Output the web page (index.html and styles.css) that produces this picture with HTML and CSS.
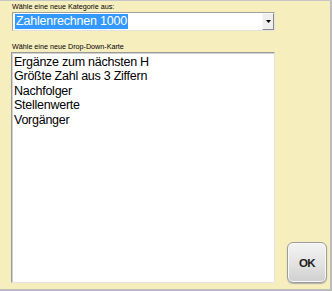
FILE: index.html
```html
<!DOCTYPE html>
<html lang="de">
<head>
  <meta charset="UTF-8" />
  <meta name="viewport" content="width=device-width, initial-scale=1.0" />
  <title>Kartenauswahl</title>
  <link rel="stylesheet" href="styles.css">
</head>
<body>
  <div class="panel">
    <div class="caption">Wähle eine neue Kategorie aus:</div>
    <div class="combo">
      <span class="combo-value">Zahlenrechnen 1000</span>
      <span class="combo-btn">
        <svg width="5" height="3" viewBox="0 0 5 3"><path d="M0 0H5L2.5 3Z" fill="#000"/></svg>
      </span>
    </div>

    <div class="caption second">Wähle eine neue Drop-Down-Karte</div>
    <div class="row">
      <ul class="listbox">
        <li>Ergänze zum nächsten H</li>
        <li>Größte Zahl aus 3 Ziffern</li>
        <li>Nachfolger</li>
        <li>Stellenwerte</li>
        <li>Vorgänger</li>
      </ul>
      <button class="ok">OK</button>
    </div>
  </div>
</body>
</html>
```

FILE: styles.css
```css
body {
  margin: 0;
}
.panel {
  box-sizing: border-box;
  width: 332px;
  height: 291px;
  padding: 1px 0 0 11px;
  background: #f7eebe;
  border-top: 1px solid #c6c6c6;
  border-right: 2px solid #bcbcbc;
  border-bottom: 2px solid #bcbcbc;
  font-family: "Liberation Sans", Arial, sans-serif;
}
.caption {
  margin-left: 1px;
  height: 9px;
  font-size: 7.2px;
  line-height: 9px;
  color: #000;
}
.caption.second {
  margin-top: 11px;
}
.combo {
  box-sizing: border-box;
  display: flex;
  align-items: center;
  justify-content: space-between;
  width: 263px;
  height: 19px;
  margin: 1px 0 0 1px;
  padding-left: 2px;
  background: #fff;
  border: 1px solid;
  border-color: #a0a0a0 #e2e2e2 #e2e2e2 #a0a0a0;
}
.combo-value {
  padding: 0 1px;
  font-size: 12.5px;
  letter-spacing: -0.2px;
  line-height: 15px;
  color: #fff;
  background: #3399ff;
}
.combo-btn {
  box-sizing: border-box;
  display: flex;
  align-items: center;
  justify-content: center;
  width: 12px;
  height: 17px;
  background: #efefef;
  border: 1px solid;
  border-color: #fafafa #8a8a8a #8a8a8a #fafafa;
}
.row {
  display: flex;
  align-items: flex-end;
  gap: 12px;
  margin-top: 1px;
}
.listbox {
  box-sizing: border-box;
  width: 264px;
  height: 231px;
  margin: 0;
  padding: 2px 0 0 2px;
  list-style: none;
  background: #fff;
  border: 1px solid;
  border-color: #9a9a9a #e4e4e4 #e4e4e4 #9a9a9a;
  box-shadow: inset 1px 1px 0 #d2d2d2;
  font-size: 12.5px;
  letter-spacing: -0.25px;
  line-height: 14.4px;
  color: #000;
}
.ok {
  box-sizing: border-box;
  width: 40px;
  height: 41px;
  margin-bottom: 0;
  padding: 0;
  border: 1px solid #9c9c9c;
  border-radius: 6px;
  background: linear-gradient(#f4f4f4, #e2e2e2 55%, #cfcfcf);
  box-shadow: inset 0 0 0 1px #f8f8f8, 0 1px 1px #b0b0b0;
  font-family: "Liberation Sans", Arial, sans-serif;
  font-size: 11.5px;
  font-weight: bold;
  letter-spacing: -0.5px;
  color: #1a1a1a;
  cursor: pointer;
}
```
